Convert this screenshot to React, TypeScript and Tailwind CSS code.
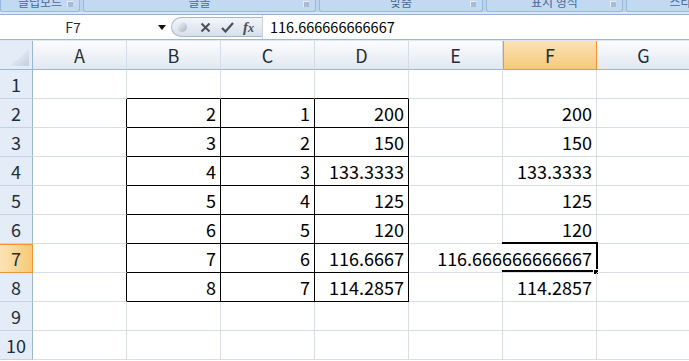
import React from "react"

// Excel 2007 style sheet view (Korean UI), zoomed in

const COLS = ["A", "B", "C", "D", "E", "F", "G"]

type Row = { n: number; cells: Record<string, string> }

const ROWS: Row[] = [
  { n: 1, cells: {} },
  { n: 2, cells: { B: "2", C: "1", D: "200", F: "200" } },
  { n: 3, cells: { B: "3", C: "2", D: "150", F: "150" } },
  { n: 4, cells: { B: "4", C: "3", D: "133.3333", F: "133.3333" } },
  { n: 5, cells: { B: "5", C: "4", D: "125", F: "125" } },
  { n: 6, cells: { B: "6", C: "5", D: "120", F: "120" } },
  { n: 7, cells: { B: "7", C: "6", D: "116.6667", F: "116.666666666667" } },
  { n: 8, cells: { B: "8", C: "7", D: "114.2857", F: "114.2857" } },
  { n: 9, cells: {} },
  { n: 10, cells: {} },
]

const font = { fontFamily: '"Noto Sans CJK KR", "Noto Sans", sans-serif' }

function inTable(col: string, n: number) {
  return ["B", "C", "D"].includes(col) && n >= 2 && n <= 8
}

function RibbonGroup({ label, width, launcher = true }: { label: string; width: string; launcher?: boolean }) {
  return (
    <div className={`${width} relative h-[12px] shrink-0 overflow-hidden rounded-b-[3px] border border-t-0 border-[#9ab7dd] bg-[#c3d9f2]`}>
      <div className="-mt-[7px] text-center text-[12px] leading-[17px] text-[#47689a]">{label}</div>
      {launcher && <div className="absolute right-[6px] top-[1px] h-[6px] w-[6px] border-l border-t border-[#e8eef7] bg-[#a9bbd2]" />}
    </div>
  )
}

function Cell({ col, row }: { col: string; row: Row }) {
  const n = row.n
  const val = row.cells[col]
  const table = inTable(col, n)
  const leftOfTable = col === "A" && n >= 2 && n <= 8
  const aboveTable = ["B", "C", "D"].includes(col) && n === 1
  const selected = col === "F" && n === 7
  const overflowed = col === "E" && n === 7

  let border = "border-r border-b border-[#d9dde6]"
  if (table) border = "border-r border-b border-black"
  else if (leftOfTable) border = "border-r border-r-black border-b border-b-[#d9dde6]"
  else if (aboveTable) border = "border-r border-r-[#d9dde6] border-b border-b-black"
  else if (overflowed) border = "border-b border-[#d9dde6]"

  return (
    <div className={`relative flex h-[29px] items-center justify-end pr-[4px] text-[18px] text-black ${border}`}>
      {val && <span className="whitespace-nowrap leading-none">{val}</span>}
      {selected && (
        <>
          <div className="pointer-events-none absolute -left-[1px] -top-[2px] h-[30px] w-[96px] border-y-2 border-r-2 border-black" />
          <div className="absolute -bottom-[3px] -right-[3px] h-[6px] w-[6px] border border-white bg-black" />
        </>
      )}
    </div>
  )
}

export default function App() {
  return (
    <div className="h-[361px] w-[689px] overflow-hidden bg-white" style={font}>
      {/* Ribbon group labels (cut off) */}
      <div className="flex h-[12px] gap-[3px] bg-[#bcd3ee] pl-0">
        <RibbonGroup label="클립보드" width="w-[80px]" />
        <RibbonGroup label="글꼴" width="w-[233px]" />
        <RibbonGroup label="맞춤" width="w-[164px]" />
        <RibbonGroup label="표시 형식" width="w-[137px]" />
        <RibbonGroup label="스타일" width="w-[120px]" launcher={false} />
      </div>
      <div className="h-[2px] bg-[#dbe7f6]" />
      <div className="h-[1px] bg-[#94b1d9]" />

      {/* Formula bar */}
      <div className="flex h-[24px] items-stretch bg-white">
        <div className="relative flex w-[171px] shrink-0 items-center">
          <span className="w-[146px] text-center text-[14px] text-[#1c3050]">F7</span>
          <svg className="absolute left-[158px] top-[10px]" width="8" height="5" viewBox="0 0 8 5">
            <path d="M0 0 H8 L4 5 Z" fill="#111" />
          </svg>
        </div>
        <div className="my-[2px] flex w-[91px] shrink-0 items-center rounded-l-full border border-r-0 border-[#a6b7cf] bg-gradient-to-b from-[#f3f6fb] to-[#d5dfec]">
          <div className="ml-[5px] h-[10px] w-[10px] rounded-full bg-gradient-to-br from-[#fafbfd] to-[#a8b2c0]" />
          <svg className="ml-[13px]" width="11" height="11" viewBox="0 0 11 11">
            <path d="M1.5 1.5 L9.5 9.5 M9.5 1.5 L1.5 9.5" stroke="#4b4f57" strokeWidth="2" />
          </svg>
          <svg className="ml-[10px]" width="13" height="11" viewBox="0 0 13 11">
            <path d="M1 6 L4.5 9.5 L12 1" fill="none" stroke="#4b4f57" strokeWidth="2.2" />
          </svg>
          <span className="ml-[9px] text-[15px] font-bold italic leading-none text-[#4b4f57]" style={{ fontFamily: '"Liberation Serif", serif' }}>
            f<span className="text-[12px]">x</span>
          </span>
        </div>
        <div className="flex flex-1 items-center border-l border-[#c9d3e0] pl-[7px] text-[14.5px] text-black">116.666666666667</div>
      </div>
      <div className="h-[1px] bg-[#a4b6cc]" />
      <div className="h-[1px] bg-[#dde6f1]" />

      {/* Sheet grid */}
      <div className="grid grid-cols-[33px_repeat(7,94px)]">
        {/* corner */}
        <div className="relative h-[29px] border-b border-r border-[#9eb6ce] bg-[#e4ecf7]">
          <svg className="absolute bottom-[3px] right-[3px]" width="19" height="17" viewBox="0 0 19 17">
            <defs>
              <linearGradient id="tri" x1="0" y1="0" x2="1" y2="1">
                <stop offset="0" stopColor="#f7f9fc" />
                <stop offset="1" stopColor="#c2cfdf" />
              </linearGradient>
            </defs>
            <path d="M19 0 V17 H0 Z" fill="url(#tri)" />
          </svg>
        </div>
        {COLS.map((c) =>
          c === "F" ? (
            <div
              key={c}
              className="flex h-[29px] items-center justify-center border-x border-b border-[#f29536] bg-gradient-to-b from-[#fbe3b5] to-[#f6c978] text-[18px] text-[#1f2d3d]"
            >
              {c}
            </div>
          ) : (
            <div
              key={c}
              className="flex h-[29px] items-center justify-center border-b border-r border-b-[#9eb6ce] border-r-[#d4dce7] bg-gradient-to-b from-[#fbfcfe] to-[#e2e8f0] text-[18px] text-[#1f2d3d]"
            >
              {c}
            </div>
          )
        )}

        {ROWS.map((row) => (
          <React.Fragment key={row.n}>
            {row.n === 7 ? (
              <div className="flex h-[29px] items-center justify-center border-y border-r border-[#f29536] bg-gradient-to-r from-[#fbe3b5] to-[#f6c978] text-[18px] text-[#1f2d3d]">
                {row.n}
              </div>
            ) : (
              <div className="flex h-[29px] items-center justify-center border-b border-r border-b-[#c5d2e3] border-r-[#9eb6ce] bg-[#e4ecf7] text-[18px] text-[#1f2d3d]">
                {row.n}
              </div>
            )}
            {COLS.map((c) => (
              <Cell key={c} col={c} row={row} />
            ))}
          </React.Fragment>
        ))}
      </div>
    </div>
  )
}
